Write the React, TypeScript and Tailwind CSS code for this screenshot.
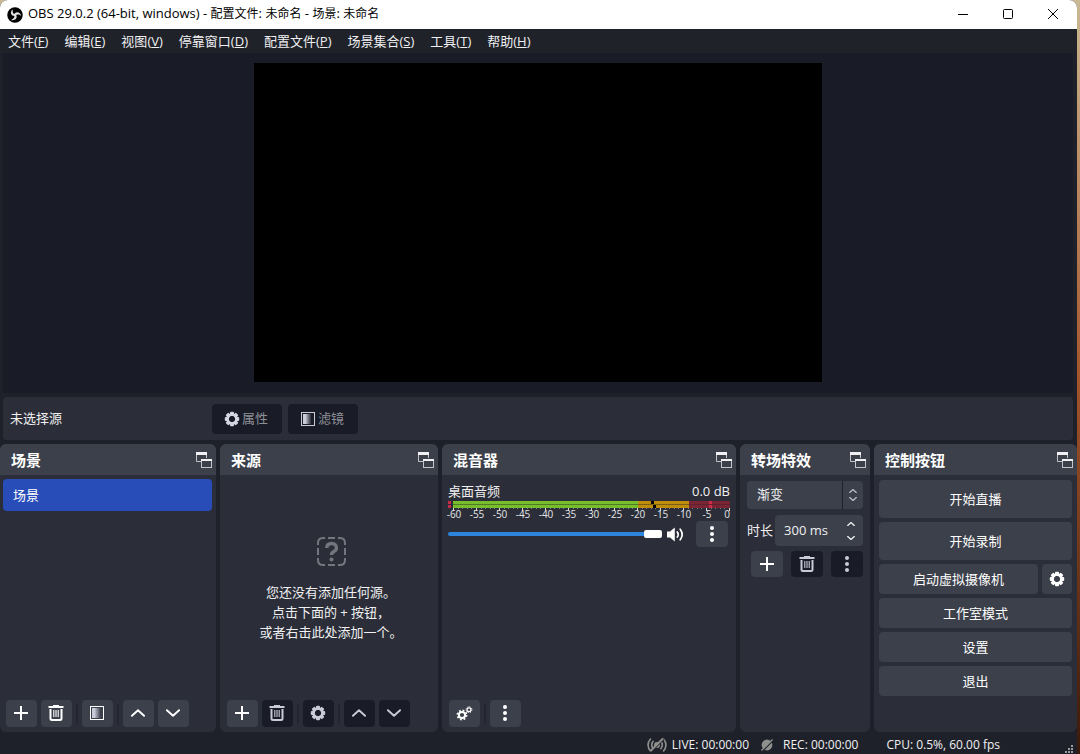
import type { ReactNode } from "react";

const Gear = ({ size = 16 }: { size?: number }) => (
  <svg width={size} height={size} viewBox="0 0 16 16" fill="currentColor">
    {[0, 45, 90, 135].map((angle) => (
      <rect
        key={angle}
        x="6"
        y="0.8"
        width="4"
        height="14.4"
        rx="1"
        transform={`rotate(${angle} 8 8)`}
        mask="url(#gear-hole)"
      />
    ))}
    <mask id="gear-hole" maskUnits="userSpaceOnUse" x="-4" y="-4" width="24" height="24">
      <rect x="-4" y="-4" width="24" height="24" fill="white" />
      <circle cx="8" cy="8" r="3.2" fill="black" />
    </mask>
    <circle cx="8" cy="8" r="4.5" fill="none" stroke="currentColor" strokeWidth="2.6" />
  </svg>
);

const Gears = () => (
  <svg width="17" height="15" viewBox="0 0 17 15" fill="none" stroke="currentColor">
    <circle cx="6" cy="9" r="3.1" strokeWidth="2" />
    <circle cx="6" cy="9" r="4.6" strokeWidth="1.7" strokeDasharray="1.8 1.81" />
    <circle cx="13" cy="3.7" r="1.9" strokeWidth="1.2" />
    <circle cx="13" cy="3.7" r="2.9" strokeWidth="1" strokeDasharray="1.2 1.08" />
  </svg>
);

const Plus = () => (
  <svg width="14" height="14" viewBox="0 0 14 14" fill="none" stroke="currentColor" strokeWidth="2">
    <path d="M7 0v14M0 7h14" />
  </svg>
);

const Trash = () => (
  <svg width="16" height="16" viewBox="0 0 16 16" fill="none" stroke="currentColor">
    <path d="M0.5 2h15" strokeWidth="2" />
    <path d="M5 0.7h6" strokeWidth="1.4" />
    <path d="M2.5 4v9.5q0 1.5 1.5 1.5h8q1.5 0 1.5-1.5V4" strokeWidth="2" />
    <path d="M5.8 5v7M8 5v7M10.2 5v7" strokeWidth="1.1" />
  </svg>
);

const Filters = () => (
  <svg width="14" height="14" viewBox="0 0 14 14">
    <defs>
      <linearGradient id="filter-fade">
        <stop offset="0.3" stopColor="currentColor" />
        <stop offset="1" stopColor="currentColor" stopOpacity="0.1" />
      </linearGradient>
    </defs>
    <rect x="0.5" y="0.5" width="13" height="13" fill="none" stroke="currentColor" />
    <rect x="2" y="2" width="8" height="10" fill="url(#filter-fade)" />
  </svg>
);

const Chevron = ({ down = false, small = false }: { down?: boolean; small?: boolean }) => (
  <svg
    width={small ? 8 : 14}
    height={small ? 4 : 8}
    viewBox="0 0 15 8"
    fill="none"
    stroke="currentColor"
    strokeWidth={small ? 2.6 : 2}
    strokeLinecap="round"
    strokeLinejoin="round"
  >
    <path d={down ? "M1 1l6.5 6L14 1" : "M1 7l6.5-6L14 7"} />
  </svg>
);

const Dots = () => (
  <svg width="4" height="16" viewBox="0 0 4 16" fill="currentColor">
    <circle cx="2" cy="2" r="2" />
    <circle cx="2" cy="8" r="2" />
    <circle cx="2" cy="14" r="2" />
  </svg>
);

const Popout = () => (
  <svg width="16" height="16" viewBox="0 0 16 16" fill="none" stroke="currentColor">
    <path d="M5 9.5H0.5v-9h10V6" strokeOpacity="0.75" />
    <path d="M0 1.5h11" strokeWidth="3" />
    <rect x="5.5" y="7.5" width="10" height="8" strokeOpacity="0.75" />
    <path d="M5 8h11" strokeWidth="2" />
  </svg>
);

const Speaker = () => (
  <svg width="17" height="15" viewBox="0 0 17 15" fill="currentColor">
    <path d="M0 4.5h3L7.8 0.5v14L3 10.5H0z" />
    <g fill="none" stroke="currentColor" strokeWidth="1.7" strokeLinecap="round">
      <path d="M10.3 5q1.8 2.5 0 5" />
      <path d="M13.2 2.2q4 5.3 0 10.6" />
    </g>
  </svg>
);

const Logo = () => (
  <svg width="16" height="16" viewBox="0 0 24 24">
    <circle cx="12" cy="12" r="11.6" fill="#000" />
    {[0, 120, 240].map((angle) => (
      <path
        key={angle}
        transform={`rotate(${angle} 12 12)`}
        d="M8.6 3.2C4.8 6.4 5.3 12 9.4 13.3c2.2 0.7 4.2-0.4 4.8-2.2-3 0.3-6.6-1.5-5.6-7.9z"
        fill="#e4e4e4"
      />
    ))}
  </svg>
);

const NoSource = () => (
  <svg width="29" height="29" viewBox="0 0 29 29" fill="none" stroke="#74767d" strokeWidth="2">
    <path d="M1 8V6q0-5 5-5h2M21 1h2q5 0 5 5v2M28 21v2q0 5-5 5h-2M8 28H6q-5 0-5-5v-2M11 1h7M11 28h7M1 11v7M28 11v7" />
    <path d="M9.8 11q0-4.5 4.8-4.5T19.4 11q0 2.2-2.5 3.6-2.4 1.3-2.4 3.4" strokeWidth="3.4" />
    <circle cx="14.5" cy="22.5" r="2" fill="#74767d" stroke="none" />
  </svg>
);

const StreamOff = () => (
  <svg width="20" height="16" viewBox="0 0 20 16" fill="none" stroke="#8f8f8d" strokeWidth="1.6">
    <path d="M3.8 1.5q-5.5 6.5 0 13M16.2 1.5q5.5 6.5 0 13M6.5 3.8q-3.6 4.2 0 8.4M13.5 3.8q3.6 4.2 0 8.4" />
    <circle cx="10" cy="8" r="3" fill="#8f8f8d" stroke="none" />
    <path d="M4 15L17 2" stroke="#1f212a" strokeWidth="1.4" />
    <path d="M3.5 14L16 1.5" strokeWidth="2" />
  </svg>
);

const RecordOff = () => (
  <svg width="12" height="12" viewBox="0 0 12 12">
    <circle cx="6" cy="6" r="5.4" fill="#8f8f8d" />
    <path d="M1.5 12L12 1.5" stroke="#1f212a" strokeWidth="1.4" />
    <path d="M0.5 11.5l11-11" stroke="#8f8f8d" strokeWidth="1.4" />
  </svg>
);

type IconButtonProps = {
  label: string;
  disabled?: boolean;
  className?: string;
  children: ReactNode;
};

const IconButton = ({
  label,
  disabled,
  className = "w-[31px] h-[27px] pr-px pb-px",
  children,
}: IconButtonProps) => (
  <button
    aria-label={label}
    disabled={disabled}
    className={`${className} shrink-0 flex items-center justify-center rounded bg-[#3c404b] text-white disabled:bg-[#191b26] disabled:text-[#c9cbd8]`}
  >
    {children}
  </button>
);

const Separator = () => <div className="w-0.5 h-5 bg-[#232630]" />;

const Dock = ({ title, children }: { title: string; children: ReactNode }) => (
  <section className="min-w-0 flex flex-col rounded-md overflow-hidden bg-[#2b2e38]">
    <header className="h-[31px] shrink-0 pl-[11px] pr-1 flex items-center justify-between bg-[#3c404b]">
      <h2 className="pt-0.5 text-[15px] font-bold text-white">{title}</h2>
      <button aria-label={`浮动 ${title}`} className="text-[#f0f0f2]">
        <Popout />
      </button>
    </header>
    {children}
  </section>
);

const menus = [
  ["文件", "F"],
  ["编辑", "E"],
  ["视图", "V"],
  ["停靠窗口", "D"],
  ["配置文件", "P"],
  ["场景集合", "S"],
  ["工具", "T"],
  ["帮助", "H"],
];

const ticks = [-60, -55, -50, -45, -40, -35, -30, -25, -20, -15, -10, -5, 0];

const Meter = () => (
  <svg className="w-full mt-0.5 overflow-visible" viewBox="0 0 282 20" role="img" aria-label="音量">
    {[0, 4].map((y, row) => (
      <g key={y}>
        <rect x="0" y={y} width="3" height="3" fill="#c92a48" />
        <rect x="5" y={y} width="185" height="3" fill="#78be2c" />
        <rect x="190" y={y} width="51" height="3" fill="#bd8d0b" />
        <rect x="241" y={y} width="41" height="3" fill="#7b2434" />
        <rect x={row ? 205 : 203} y={y} width="3" height="3" fill="#000" />
        <rect x="261" y={y} width="3" height="3" fill="#d22c4c" />
      </g>
    ))}
    <rect x="5" y="3" width="185" height="1" fill="#4f7a26" />
    <rect x="190" y="3" width="51" height="1" fill="#7a5e14" />
    <rect x="241" y="3" width="41" height="1" fill="#5b2230" />
    {Array.from({ length: 61 }, (_, i) => (
      <rect
        key={i}
        x={Math.round(4.6 * i + 5)}
        y="7"
        width="1"
        height={i % 5 ? 1 : 3}
        fill={i % 5 ? "#7d7f86" : "#d4d5d8"}
      />
    ))}
    {ticks.map((db, i) => (
      <text
        key={db}
        x={db === 0 ? 279 : 6 + 23 * i}
        y="17"
        textAnchor="middle"
        fontSize="10"
        fill="#e4e5e8"
      >
        {db}
      </text>
    ))}
  </svg>
);

const ControlButton = ({ children, tall }: { children: ReactNode; tall?: boolean }) => (
  <button
    className={`${tall ? "h-[38px]" : "h-[30px]"} flex-auto shrink-0 pt-0.5 rounded bg-[#3c404b] text-white`}
  >
    {children}
  </button>
);

const TitleBar = () => (
  <header className="h-[29px] shrink-0 flex items-center pl-[7px] bg-white text-black">
    <Logo />
    <h1 className="ml-[5px] pb-0.5 whitespace-nowrap">
      OBS 29.0.2 (64-bit, windows) - <span className="text-[12px]">配置文件</span>:{" "}
      <span className="text-[12px]">未命名</span> - <span className="text-[12px]">场景</span>:{" "}
      <span className="text-[12px]">未命名</span>
    </h1>
    <div className="ml-auto flex h-full pb-0.5">
      <button aria-label="最小化" className="w-[46px] flex items-center justify-center">
        <svg width="10" height="10" viewBox="0 0 10 10" stroke="#000">
          <path d="M0 5.5h10" />
        </svg>
      </button>
      <button aria-label="最大化" className="w-11 flex items-center justify-center">
        <svg width="10" height="10" viewBox="0 0 10 10" fill="none" stroke="#000">
          <rect x="0.5" y="0.5" width="9" height="9" rx="1" />
        </svg>
      </button>
      <button aria-label="关闭" className="w-[46px] mr-px flex items-center justify-center">
        <svg width="10" height="10" viewBox="0 0 10 10" stroke="#000">
          <path d="M0 0l10 10M10 0L0 10" />
        </svg>
      </button>
    </div>
  </header>
);

const MenuBar = () => (
  <nav className="h-6 shrink-0 flex items-center gap-4 pt-px pl-2 bg-[#1f2229]">
    {menus.map(([name, key]) => (
      <button key={name} className="whitespace-nowrap">
        {name}(<span className="underline">{key}</span>)
      </button>
    ))}
  </nav>
);

const SourceBar = () => (
  <div className="h-[43px] shrink-0 ml-[3px] mr-1 my-1 pl-[7px] flex items-center gap-1.5 rounded bg-[#2b2e38]">
    <span className="w-[196px]">未选择源</span>
    <button
      disabled
      className="h-[30px] pl-3 pr-[14px] flex items-center gap-0.5 rounded bg-[#191b26] text-[#8e9098]"
    >
      <span className="text-[#d5d7e3]">
        <Gear />
      </span>
      属性
    </button>
    <button
      disabled
      className="h-[30px] pl-3 pr-[14px] flex items-center gap-0.5 rounded bg-[#191b26] text-[#8e9098]"
    >
      <span className="w-4 flex justify-center text-[#c9cbd8]">
        <Filters />
      </span>
      滤镜
    </button>
  </div>
);

const Scenes = () => (
  <Dock title="场景">
    <ul className="flex-1 pt-1 pl-[3px] pr-1">
      <li className="h-8 pl-[10px] pt-px flex items-center rounded bg-[#284cb8] text-white">场景</li>
    </ul>
    <div className="flex items-center gap-1 px-1.5 pb-[5px]">
      <IconButton label="添加场景">
        <Plus />
      </IconButton>
      <IconButton label="删除场景">
        <Trash />
      </IconButton>
      <Separator />
      <IconButton label="场景滤镜">
        <Filters />
      </IconButton>
      <Separator />
      <IconButton label="上移场景">
        <Chevron />
      </IconButton>
      <IconButton label="下移场景">
        <Chevron down />
      </IconButton>
    </div>
  </Dock>
);

const Sources = () => (
  <Dock title="来源">
    <div className="flex-1 flex flex-col items-center justify-center pl-1 pt-1">
      <NoSource />
      <p className="mt-4 leading-5 text-center">
        您还没有添加任何源。
        <br />
        点击下面的 + 按钮，
        <br />
        或者右击此处添加一个。
      </p>
    </div>
    <div className="flex items-center gap-1 px-[7px] pb-[5px]">
      <IconButton label="添加源">
        <Plus />
      </IconButton>
      <IconButton label="删除源" disabled>
        <Trash />
      </IconButton>
      <Separator />
      <IconButton label="源属性" disabled>
        <Gear />
      </IconButton>
      <Separator />
      <IconButton label="上移源" disabled>
        <Chevron />
      </IconButton>
      <IconButton label="下移源" disabled>
        <Chevron down />
      </IconButton>
    </div>
  </Dock>
);

const Mixer = () => (
  <Dock title="混音器">
    <div className="flex-1 px-1.5 pt-2">
      <div className="flex justify-between leading-4">
        <label htmlFor="desktop-audio">桌面音频</label>
        <span>0.0 dB</span>
      </div>
      <Meter />
      <div className="flex items-center pr-0.5">
        <input
          id="desktop-audio"
          type="range"
          defaultValue={100}
          className="flex-1 min-w-0 h-1 appearance-none rounded-full bg-[#2d85de] [&::-webkit-slider-thumb]:appearance-none [&::-webkit-slider-thumb]:w-[18px] [&::-webkit-slider-thumb]:h-2 [&::-webkit-slider-thumb]:rounded-[2px] [&::-webkit-slider-thumb]:bg-white"
        />
        <button aria-label="静音" className="ml-[5px] mr-3 text-white">
          <Speaker />
        </button>
        <IconButton label="音频选项" className="w-8 h-[26px]">
          <Dots />
        </IconButton>
      </div>
    </div>
    <div className="flex items-center gap-1 px-[7px] pb-[5px]">
      <IconButton label="高级音频属性">
        <Gears />
      </IconButton>
      <Separator />
      <IconButton label="混音器菜单">
        <Dots />
      </IconButton>
    </div>
  </Dock>
);

const Transitions = () => (
  <Dock title="转场特效">
    <div className="px-[7px] pt-1.5">
      <div className="h-7 flex rounded overflow-hidden bg-[#3c404b]">
        <select aria-label="转场特效" className="flex-1 min-w-0 appearance-none pl-[10px]">
          <option>渐变</option>
        </select>
        <div className="w-[21px] flex flex-col items-center justify-center gap-1 border-l border-[#1f212a] text-[#b9bbc3]">
          <Chevron small />
          <Chevron small down />
        </div>
      </div>
      <div className="mt-1.5 flex items-center gap-0.5">
        <label htmlFor="duration" className="whitespace-nowrap">
          时长
        </label>
        <div className="flex-1 min-w-0 h-[31px] flex rounded bg-[#3c404b]">
          <input id="duration" defaultValue="300 ms" className="flex-1 min-w-0 pl-[9px] bg-transparent" />
          <div className="w-6 flex flex-col items-center justify-center gap-[10px]">
            <button aria-label="增加">
              <Chevron small />
            </button>
            <button aria-label="减少">
              <Chevron small down />
            </button>
          </div>
        </div>
      </div>
      <div className="mt-[5px] flex justify-end gap-2">
        <IconButton label="添加转场" className="w-8 h-[26px]">
          <Plus />
        </IconButton>
        <IconButton label="删除转场" disabled className="w-8 h-[26px]">
          <Trash />
        </IconButton>
        <IconButton label="转场属性" disabled className="w-8 h-[26px]">
          <Dots />
        </IconButton>
      </div>
    </div>
  </Dock>
);

const Controls = () => (
  <Dock title="控制按钮">
    <div className="p-[5px] flex flex-col gap-1">
      <div className="flex">
        <ControlButton tall>开始直播</ControlButton>
      </div>
      <div className="flex">
        <ControlButton tall>开始录制</ControlButton>
      </div>
      <div className="flex gap-1">
        <ControlButton>启动虚拟摄像机</ControlButton>
        <IconButton label="虚拟摄像机设置" className="w-[30px] h-[30px]">
          <Gear />
        </IconButton>
      </div>
      <div className="flex">
        <ControlButton>工作室模式</ControlButton>
      </div>
      <div className="flex">
        <ControlButton>设置</ControlButton>
      </div>
      <div className="flex">
        <ControlButton>退出</ControlButton>
      </div>
    </div>
  </Dock>
);

const StatusBar = () => (
  <footer className="h-[22px] shrink-0 flex items-center justify-end pt-1 pr-[3px] text-[12px]">
    <StreamOff />
    <span className="ml-[5px]">LIVE: 00:00:00</span>
    <span className="ml-3 mr-[10px]">
      <RecordOff />
    </span>
    <span>REC: 00:00:00</span>
    <span className="ml-7 mr-[65px]">CPU: 0.5%, 60.00 fps</span>
    <svg width="9" height="9" viewBox="0 0 9 9" fill="#9a9ca3" className="self-end">
      <path d="M6 0h2v2H6zM6 3h2v2H6zM3 3h2v2H3zM6 6h2v2H6zM3 6h2v2H3zM0 6h2v2H0z" />
    </svg>
  </footer>
);

const App = () => {
  return (
    <div className="min-h-screen flex pr-[3px] bg-linear-to-b from-[#c9b994] via-[#a5552a] to-[#3a1a0c]">
      <div className="flex-1 min-w-0 flex flex-col rounded-t-lg overflow-hidden bg-[#1f212a] text-[#f0f0f2] text-[13px] font-['Open_Sans','Noto_Sans_CJK_SC',sans-serif]">
        <TitleBar />
        <MenuBar />
        <main className="flex-1 flex flex-col">
          <div className="flex-1 min-h-[200px] ml-[3px] mr-1 pt-[10px] pb-[11px] flex justify-center bg-[#191b26]">
            <div className="aspect-video bg-black" />
          </div>
          <SourceBar />
          <div className="min-h-72 grid grid-cols-[216fr_218fr_294fr_130fr_203fr] gap-1">
            <Scenes />
            <Sources />
            <Mixer />
            <Transitions />
            <Controls />
          </div>
        </main>
        <StatusBar />
      </div>
    </div>
  );
};

export default App;
